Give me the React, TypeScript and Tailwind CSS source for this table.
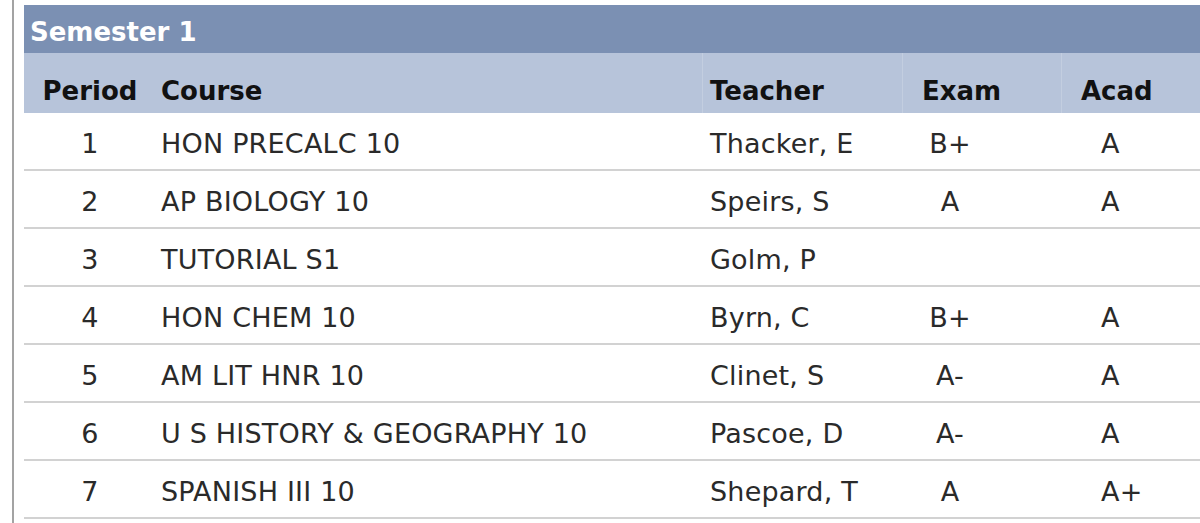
const rows = [
  { period: 1, course: "HON PRECALC 10", teacher: "Thacker, E", exam: "B+", acad: "A" },
  { period: 2, course: "AP BIOLOGY 10", teacher: "Speirs, S", exam: "A", acad: "A" },
  { period: 3, course: "TUTORIAL S1", teacher: "Golm, P", exam: "", acad: "" },
  { period: 4, course: "HON CHEM 10", teacher: "Byrn, C", exam: "B+", acad: "A" },
  { period: 5, course: "AM LIT HNR 10", teacher: "Clinet, S", exam: "A-", acad: "A" },
  { period: 6, course: "U S HISTORY & GEOGRAPHY 10", teacher: "Pascoe, D", exam: "A-", acad: "A" },
  { period: 7, course: "SPANISH III 10", teacher: "Shepard, T", exam: "A", acad: "A+" },
];

const cols = "grid grid-cols-[132px_546px_200px_159px_1fr]";

export default function App() {
  return (
    <div
      className="min-h-[523px] w-[1200px] overflow-hidden bg-white"
      style={{ fontFamily: '"DejaVu Sans", Verdana, sans-serif' }}
    >
      <div className="ml-[12px] min-h-[523px] border-l-2 border-[#a3a3a3] pl-[10px] pt-[5px]">
        <div className="w-[1200px]">
          <div className="h-[48px] bg-[#7b90b3] pl-[6px] pt-[11px] text-[26px] leading-[32px] font-bold text-white">
            Semester 1
          </div>
          <div className={`${cols} h-[60px] bg-[#b7c4da] text-[26px] leading-[32px] font-bold text-[#111]`}>
            <div className="pt-[22px] text-center">Period</div>
            <div className="pl-[5px] pt-[22px]">Course</div>
            <div className="border-l border-[#c3cee0] pl-[7px] pt-[22px]">Teacher</div>
            <div className="border-l border-[#c3cee0] pl-[19px] pt-[22px]">Exam</div>
            <div className="border-l border-[#c3cee0] pl-[19px] pt-[22px]">Acad</div>
          </div>
          {rows.map((r) => (
            <div
              key={r.period}
              className={`${cols} h-[58px] border-b-2 border-[#d2d2d2] text-[27px] leading-[32px] tracking-[0.2px] text-[#2a2a2a]`}
            >
              <div className="pt-[15px] text-center">{r.period}</div>
              <div className="pl-[5px] pt-[15px]">{r.course}</div>
              <div className="pl-[8px] pt-[15px]">{r.teacher}</div>
              <div className="pt-[15px]">
                <div className="w-[96px] text-center">{r.exam}</div>
              </div>
              <div className="pl-[40px] pt-[15px]">{r.acad}</div>
            </div>
          ))}
        </div>
      </div>
    </div>
  );
}
